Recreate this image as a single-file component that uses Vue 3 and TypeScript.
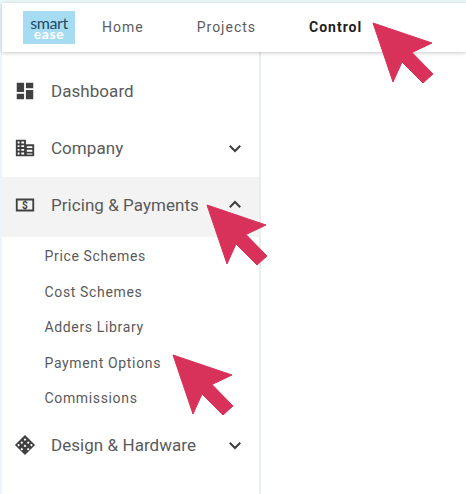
<script setup lang="ts">
const navLinks = [
  { label: 'Home', active: false },
  { label: 'Projects', active: false },
  { label: 'Control', active: true },
]

const subItems = ['Price Schemes', 'Cost Schemes', 'Adders Library', 'Payment Options', 'Commissions']

const arrowSpots = ['arrow-top', 'arrow-pricing', 'arrow-payment']
</script>

<template>
  <div class="page">
    <header class="topbar">
      <div class="logo">
        <span class="logo-smart">smart</span>
        <span class="logo-ease">ease</span>
      </div>
      <nav class="nav">
        <a v-for="link in navLinks" :key="link.label" class="nav-link" :class="{ active: link.active }">
          {{ link.label }}
        </a>
      </nav>
    </header>

    <aside class="sidebar">
      <div class="row">
        <svg class="icon" viewBox="0 0 24 24"><path d="M13 3v6h8V3M13 21h8V11h-8M3 21h8v-6H3M3 13h8V3H3v10z" /></svg>
        <span class="label">Dashboard</span>
      </div>
      <div class="row">
        <svg class="icon" viewBox="0 0 24 24">
          <path fill-rule="evenodd" d="M2 3h11v5h9v13H2zM4 5v2h2V5zM8 5v2h3V5zM4 9v2h2V9zM8 9v2h3V9zM4 13v2h2v-2zM8 13v2h3v-2zM4 17v2h2v-2zM8 17v2h3v-2zM14 10v2h6v-2zM14 14v2h6v-2zM14 18v1h6v-1z" />
        </svg>
        <span class="label">Company</span>
        <svg class="chevron" viewBox="0 0 24 24"><path d="M5 9l7 7 7-7" /></svg>
      </div>
      <div class="row open">
        <svg class="icon" viewBox="0 0 24 24">
          <path fill-rule="evenodd" d="M2 5h20v14H2zM4 7v10h16V7z" />
          <text x="12" y="16" class="dollar">$</text>
        </svg>
        <span class="label">Pricing &amp; Payments</span>
        <svg class="chevron" viewBox="0 0 24 24"><path d="M5 15l7-7 7 7" /></svg>
      </div>
      <ul class="sublist">
        <li v-for="item in subItems" :key="item" class="subitem">{{ item }}</li>
      </ul>
      <div class="row">
        <svg class="icon" viewBox="0 0 24 24">
          <path fill-rule="evenodd" d="M12 1l11 11-11 11L1 12zM12 4.500L10.500 6 12 7.500 13.500 6zM8.500 8L7 9.500 8.500 11 10 9.500zM15.500 8L14 9.500 15.500 11 17 9.500zM12 11.500L10.500 13 12 14.500 13.500 13zM5 10.500L3.500 12 5 13.500 6.500 12zM19 10.500L17.500 12 19 13.500 20.500 12zM8.500 15L7 16.500 8.500 18 10 16.500zM15.500 15L14 16.500 15.500 18 17 16.500z" />
        </svg>
        <span class="label">Design &amp; Hardware</span>
        <svg class="chevron" viewBox="0 0 24 24"><path d="M5 9l7 7 7-7" /></svg>
      </div>
    </aside>

    <svg v-for="spot in arrowSpots" :key="spot" class="arrow" :class="spot" viewBox="0 0 62 62">
      <path d="M1 1L60 21 40 30.500 61 52 51 61 30 40 21 60z" />
    </svg>
  </div>
</template>

<style>
html,
body {
  margin: 0;
  background: #ffffff;
}
</style>

<style scoped>
.page {
  position: relative;
  width: 466px;
  height: 494px;
  overflow: hidden;
  box-sizing: border-box;
  padding: 3px 0 0 2px;
  background: #ffffff;
  box-shadow: inset 2px 3px 0 #e9f7f9;
  font-family: Roboto, "Liberation Sans", sans-serif;
}

.topbar {
  position: relative;
  z-index: 1;
  display: flex;
  align-items: center;
  height: 49px;
  padding-left: 21px;
  background: #ffffff;
  box-shadow: 0 1px 4px rgba(0, 0, 0, 0.22);
}

.logo {
  display: flex;
  flex-direction: column;
  align-items: center;
  justify-content: center;
  width: 52px;
  height: 33px;
  background: #a6dcf1;
  font-family: Lato, sans-serif;
}

.logo-smart {
  color: #1f4a62;
  font-size: 16px;
  line-height: 12px;
  letter-spacing: -0.4px;
}

.logo-ease {
  color: #ffffff;
  font-size: 14px;
  font-weight: 700;
  line-height: 10px;
  letter-spacing: 0.6px;
}

.nav {
  display: flex;
  gap: 53px;
  margin: 0 0 2px 27px;
}

.nav-link {
  font-size: 14px;
  letter-spacing: 1px;
  color: #5c5c5c;
}

.nav-link.active {
  font-weight: 700;
  color: #1f1f1f;
}

.sidebar {
  box-sizing: border-box;
  width: 259px;
  height: 442px;
  padding-top: 11px;
  background: #ffffff;
  border-right: 2px solid #e8eded;
}

.row {
  display: flex;
  align-items: center;
  box-sizing: border-box;
  height: 57px;
  padding: 0 15px 2px 12px;
}

.row.open {
  height: 60px;
  padding-bottom: 5px;
  background: #f3f3f3;
}

.icon {
  flex: none;
  width: 22px;
  height: 22px;
  fill: #404040;
}

.dollar {
  font-family: Roboto, sans-serif;
  font-size: 11px;
  font-weight: 700;
  text-anchor: middle;
}

.label {
  flex: 1;
  margin-left: 15px;
  font-size: 17px;
  letter-spacing: 0.05px;
  color: #5a5a5a;
}

.chevron {
  flex: none;
  width: 18px;
  height: 18px;
  fill: none;
  stroke: #3d3d3d;
  stroke-width: 2.6;
}

.sublist {
  margin: 0;
  padding: 2px 0 1px 42.500px;
  list-style: none;
}

.subitem {
  height: 35.500px;
  line-height: 35.500px;
  font-size: 14px;
  letter-spacing: 0.65px;
  color: #5a5a5a;
}

.arrow {
  position: absolute;
  z-index: 2;
  width: 62px;
  height: 62px;
  fill: #d8325a;
  stroke: #d8325a;
  stroke-width: 1;
  stroke-linejoin: round;
}

.arrow-top {
  left: 372px;
  top: 22px;
}

.arrow-pricing {
  left: 206px;
  top: 204px;
}

.arrow-payment {
  left: 172px;
  top: 354px;
}
</style>
